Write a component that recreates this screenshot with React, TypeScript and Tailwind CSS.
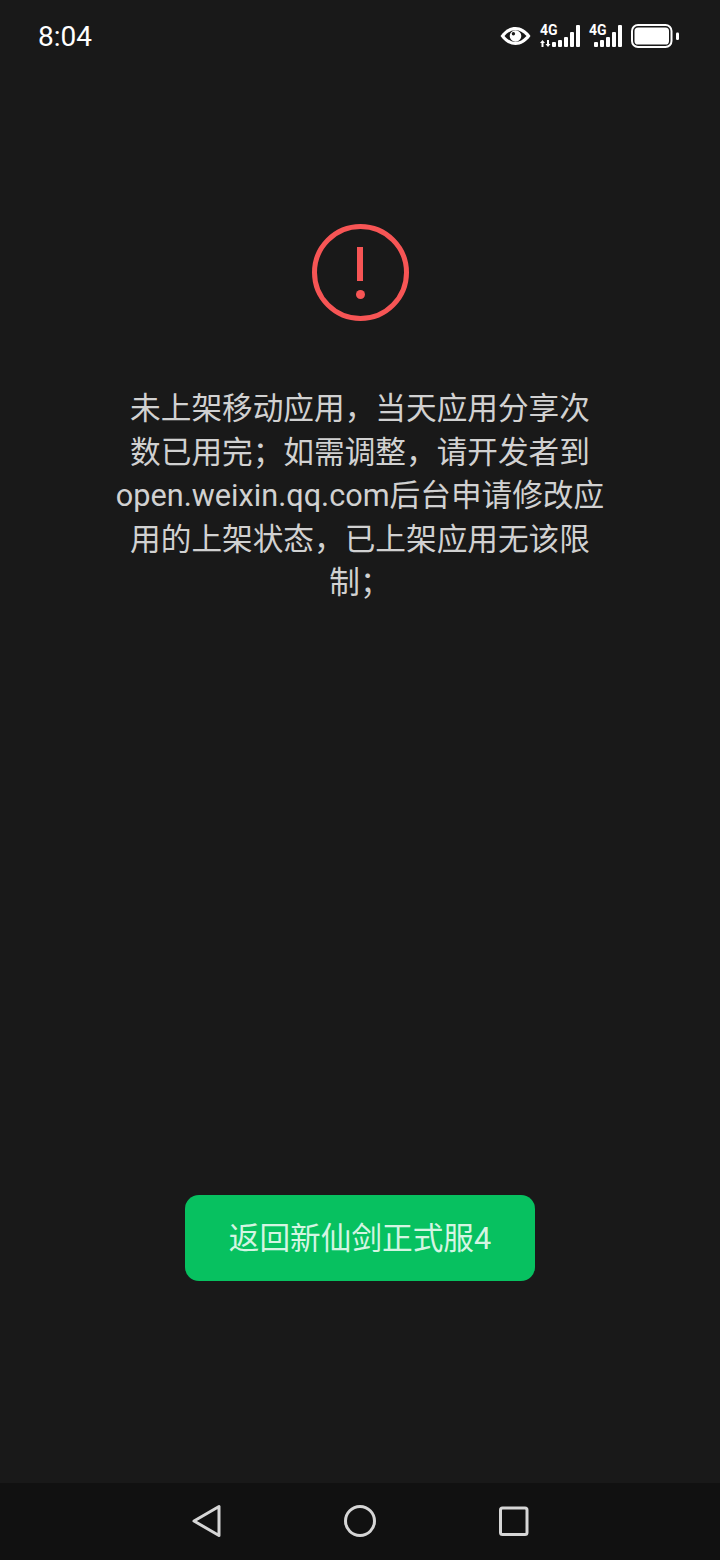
const base = "font-['Roboto','Noto_Sans_CJK_SC',sans-serif]";

const StatusIcons = () => (
  <div className="flex items-center gap-[9px] text-white">
    <svg width="31" height="22" viewBox="0 0 31 22" fill="none">
      <path d="M.5 11C5 4.8 10 2 15.5 2S26 4.8 30.5 11C26 17.2 21 20 15.5 20S5 17.2.5 11Z" fill="white" />
      <path d="M4.5 11C8 7 11.5 5.2 15.5 5.2S23 7 26.5 11C23 15 19.5 16.8 15.5 16.8S8 15 4.5 11Z" fill="#191919" />
      <circle cx="15.5" cy="11" r="5.8" fill="white" />
      <circle cx="13.4" cy="8.8" r="1.7" fill="#191919" />
    </svg>
    <Signal arrows />
    <Signal />
    <svg width="48" height="24" viewBox="0 0 48 24" fill="none">
      <rect x="1" y="1" width="39.5" height="22" rx="6" stroke="white" strokeWidth="2" />
      <rect x="3.5" y="3.5" width="34.5" height="17" rx="3.6" fill="white" />
      <rect x="45" y="8.5" width="3" height="7.5" rx="1.2" fill="white" />
    </svg>
  </div>
);

const Signal = ({ arrows = false }: { arrows?: boolean }) => (
  <div className={`relative h-[22px] ${arrows ? "w-[40px]" : "w-[33px]"}`}>
    <span className="absolute left-0 top-[-1px] font-['Roboto',sans-serif] text-[14px] leading-[12px] font-bold">
      4G
    </span>
    {arrows ? (
      <svg width="12" height="7" viewBox="0 0 12 7" className="absolute left-0 bottom-0">
        <path d="M2.5 0L5 3H3.5V7H1.5V3H0ZM8 7L5.5 4H7V0H9V4H10.5Z" fill="white" />
      </svg>
    ) : null}
    <div className="absolute bottom-0 right-0 flex items-end gap-[1.5px]">
      {[5, 7, 10, 15, 22].map((h) => (
        <div key={h} className="w-[4.5px] rounded-[1px] bg-white" style={{ height: h }} />
      ))}
    </div>
  </div>
);

export default function App() {
  return (
    <div className={`${base} flex h-[1560px] w-[720px] flex-col bg-[#191919]`}>
      <div className="flex h-[72px] shrink-0 items-center justify-between pl-[38px] pr-[41px]">
        <span className="pt-[1px] font-['Roboto',sans-serif] text-[28px] leading-none text-white">8:04</span>
        <StatusIcons />
      </div>

      <div className="flex flex-1 flex-col items-center">
        <div className="mt-[152px] flex h-[97px] w-[97px] items-center justify-center rounded-full border-[5px] border-[#f75555]">
          <div className="flex flex-col items-center gap-[9px]">
            <div className="h-[34px] w-[6px] bg-[#f75555]" />
            <div className="h-[9px] w-[9px] rounded-full bg-[#f75555]" />
          </div>
        </div>

        <p className="mt-[66px] w-[489px] text-center text-[30.67px] leading-[43.5px] text-[#d1d1d1]">
          未上架移动应用，当天应用分享次数已用完；如需调整，请开发者到open.weixin.qq.com后台申请修改应用的上架状态，已上架应用无该限制；
        </p>

        <button className="mt-auto mb-[202px] flex h-[86px] w-[350px] items-center justify-center rounded-[14px] bg-[#07c160] pt-[2px] text-[30.67px] text-[#d4f5e2]">
          返回新仙剑正式服4
        </button>
      </div>

      <div className="flex h-[77px] shrink-0 items-center justify-center gap-[121px] bg-[#111111] pb-[1px] pl-[1px]">
        <svg width="30" height="34" viewBox="0 0 30 34" fill="none">
          <path d="M27 2.5V31.5L2 17Z" stroke="#d6d6d6" strokeWidth="3" strokeLinejoin="round" />
        </svg>
        <svg width="34" height="34" viewBox="0 0 34 34" fill="none">
          <circle cx="17" cy="17" r="14.5" stroke="#d6d6d6" strokeWidth="3" />
        </svg>
        <svg width="32" height="32" viewBox="0 0 32 32" fill="none">
          <rect x="2.5" y="3" width="26.5" height="26.5" rx="2" stroke="#d6d6d6" strokeWidth="3" />
        </svg>
      </div>
    </div>
  );
}
